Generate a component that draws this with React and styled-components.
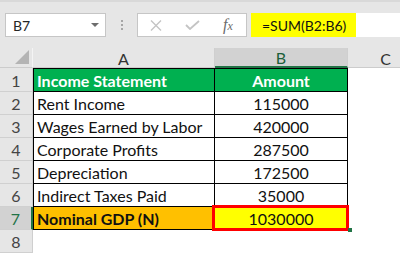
import React from "react";
import styled, { createGlobalStyle } from "styled-components";

const GlobalStyle = createGlobalStyle`
  html, body {
    margin: 0;
    padding: 0;
    background: #ffffff;
    overflow: hidden;
  }
  body {
    font-family: Lato, "Open Sans", "Liberation Sans", sans-serif;
  }
`;

const rows = [
  { label: "Income Statement", value: "Amount", kind: "head" },
  { label: "Rent Income", value: "115000" },
  { label: "Wages Earned by Labor", value: "420000" },
  { label: "Corporate Profits", value: "287500" },
  { label: "Depreciation", value: "172500" },
  { label: "Indirect Taxes Paid", value: "35000" },
  { label: "Nominal GDP (N)", value: "1030000", kind: "total" },
];

const App = () => {
  return (
    <Window>
      <GlobalStyle />
      <Toolbar>
        <NameBox>
          <span>B7</span>
          <Caret />
        </NameBox>
        <Grip>
          <i />
          <i />
          <i />
        </Grip>
        <FuncBox>
          <IconSlot>
            <svg width="12" height="11" viewBox="0 0 12 11">
              <path d="M1 0.5 L11 10.5 M11 0.5 L1 10.5" stroke="#c4c4c4" strokeWidth="1.4" fill="none" />
            </svg>
          </IconSlot>
          <IconSlot>
            <svg width="15" height="10" viewBox="0 0 15 10">
              <path d="M1 5 L5 9 L14 1" stroke="#c4c4c4" strokeWidth="1.8" fill="none" />
            </svg>
          </IconSlot>
          <IconSlot $fx>
            f<sub>x</sub>
          </IconSlot>
        </FuncBox>
        <FormulaBar>
          <Formula>=SUM(B2:B6)</Formula>
        </FormulaBar>
      </Toolbar>

      <Sheet>
        <Corner>
          <Tri />
        </Corner>
        <ColHead>A</ColHead>
        <ColHead $active>B</ColHead>
        <ColHead>C</ColHead>

        {rows.map((r, i) => (
          <React.Fragment key={r.label}>
            <RowHead $active={i === 6} $first={i === 0}>
              {i + 1}
            </RowHead>
            <LabelCell $kind={r.kind} $first={i === 0}>
              {r.label}
            </LabelCell>
            <ValueCell $kind={r.kind} $first={i === 0}>
              {r.value}
            </ValueCell>
            <Blank $first={i === 0} />
          </React.Fragment>
        ))}

        <RowHead>8</RowHead>
        <Blank />
        <Blank />
        <Blank />
      </Sheet>
    </Window>
  );
};

export default App;

const Window = styled.div`
  width: 400px;
  height: 253px;
  overflow: hidden;
  background: #ffffff;
`;

const Toolbar = styled.div`
  display: flex;
  align-items: center;
  height: 48px;
  box-sizing: border-box;
  padding-left: 5px;
  background: #e6e6e6;
  border-top: 2px solid #d9d9d9;
`;

const NameBox = styled.div`
  display: flex;
  align-items: center;
  justify-content: space-between;
  box-sizing: border-box;
  width: 101px;
  height: 24px;
  padding: 0 6px 0 7px;
  background: #ffffff;
  border: 1px solid #c6c6c6;
  font-size: 14px;
  color: #262626;
`;

const Caret = styled.span`
  width: 0;
  height: 0;
  border-left: 4px solid transparent;
  border-right: 4px solid transparent;
  border-top: 4px solid #6d6d6d;
`;

const Grip = styled.div`
  display: flex;
  flex-direction: column;
  align-items: center;
  gap: 2px;
  width: 31px;
  i {
    display: block;
    width: 2px;
    height: 2px;
    background: #a6a6a6;
  }
`;

const FuncBox = styled.div`
  display: flex;
  box-sizing: border-box;
  width: 110px;
  height: 24px;
  background: #ffffff;
  border: 1px solid #c6c6c6;
`;

const IconSlot = styled.div`
  display: flex;
  align-items: center;
  justify-content: center;
  width: 36px;
  height: 100%;
  font-family: "Liberation Serif", serif;
  font-style: italic;
  font-size: 16px;
  color: #6b6b6b;
  sub {
    font-size: 12px;
    vertical-align: baseline;
    position: relative;
    top: 1px;
  }
`;

const FormulaBar = styled.div`
  flex: 1;
  display: flex;
  box-sizing: border-box;
  height: 24px;
  margin-left: 4px;
  background: #ffffff;
`;

const Formula = styled.div`
  display: flex;
  align-items: center;
  box-sizing: border-box;
  width: 105px;
  height: 100%;
  padding-left: 11px;
  background: #ffff00;
  font-size: 14px;
  color: #111111;
`;

const Sheet = styled.div`
  display: grid;
  grid-template-columns: 33px 182px 133px 76px;
  grid-template-rows: 20px 24px repeat(7, 23px);
  font-size: 16px;
`;

const HeadBase = styled.div`
  display: flex;
  align-items: center;
  justify-content: center;
  box-sizing: border-box;
  background: #e6e6e6;
  color: #333333;
  border-right: 1px solid #cccccc;
  border-bottom: 1px solid #cccccc;
`;

const Corner = styled(HeadBase)`
  position: relative;
  border-right-color: #f4f4f4;
`;

const Tri = styled.span`
  position: absolute;
  right: 3px;
  bottom: 3px;
  width: 0;
  height: 0;
  border-left: 14px solid transparent;
  border-bottom: 14px solid #b4b4b4;
`;

const ColHead = styled(HeadBase)`
  padding-top: 1px;
  background: ${(p) => (p.$active ? "#d2d2d2" : "#e6e6e6")};
  color: ${(p) => (p.$active ? "#1d5f3a" : "#333333")};
  border-bottom: ${(p) => (p.$active ? "2px solid #217346" : "1px solid #cccccc")};
  border-right: 1px solid #cfcfcf;
`;

const RowHead = styled(HeadBase)`
  background: ${(p) => (p.$active ? "#d2d2d2" : "#e6e6e6")};
  color: ${(p) => (p.$active ? "#217346" : "#444444")};
  border-right: ${(p) => (p.$active ? "2px solid #217346" : "1px solid #cfcfcf")};
  border-bottom: 1px solid #d0d0d0;
  padding-top: ${(p) => (p.$first ? "1px" : "0")};
`;

const CellBase = styled.div`
  display: flex;
  align-items: center;
  box-sizing: border-box;
  padding-top: 1px;
  border-right: 1px solid #000000;
  border-bottom: 1px solid #000000;
  border-top: ${(p) => (p.$first ? "1px solid #000000" : "none")};
  white-space: nowrap;
  color: #111111;
`;

const LabelCell = styled(CellBase)`
  padding-left: 3px;
  border-left: 1px solid #000000;
  font-weight: ${(p) => (p.$kind ? 700 : 400)};
  background: ${(p) =>
    p.$kind === "head" ? "#00b050" : p.$kind === "total" ? "#ffc000" : "#ffffff"};
  color: ${(p) => (p.$kind === "head" ? "#ffffff" : "#111111")};
`;

const ValueCell = styled(CellBase)`
  position: relative;
  justify-content: center;
  font-weight: ${(p) => (p.$kind === "head" ? 700 : 400)};
  background: ${(p) =>
    p.$kind === "head" ? "#00b050" : p.$kind === "total" ? "#ffff00" : "#ffffff"};
  color: ${(p) => (p.$kind === "head" ? "#ffffff" : "#111111")};
  ${(p) =>
    p.$kind === "total" &&
    `
    &::after {
      content: "";
      position: absolute;
      top: -2px;
      left: -3px;
      right: -2px;
      bottom: -2px;
      border: 3px solid #ff0000;
      z-index: 1;
    }
    &::before {
      content: "";
      position: absolute;
      right: -5px;
      bottom: -3px;
      width: 4px;
      height: 4px;
      background: #217346;
      z-index: 2;
    }
  `}
`;

const Blank = styled.div`
  background: #ffffff;
`;
